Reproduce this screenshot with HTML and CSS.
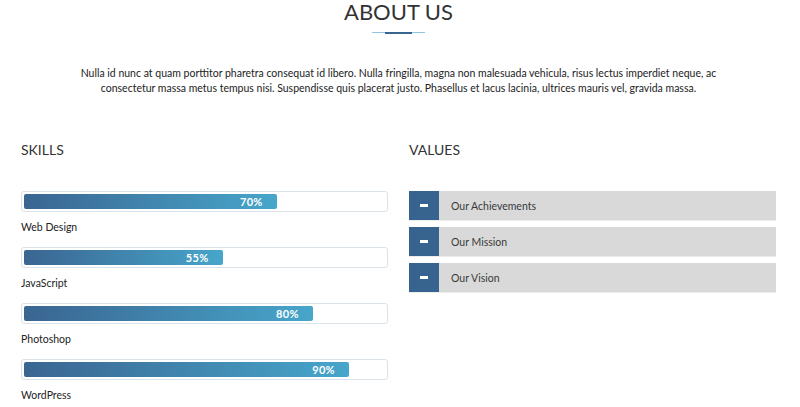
FILE: index.html
```html
<!DOCTYPE html>
<html>
<head>
<meta charset="utf-8">
<link rel="stylesheet" href="styles.css">
</head>
<body>
<section class="about">
  <h1 class="title">ABOUT US</h1>
  <div class="divider"><span class="divider-mid"></span></div>
  <p class="intro">Nulla id nunc at quam porttitor pharetra consequat id libero. Nulla fringilla, magna non malesuada vehicula, risus lectus imperdiet neque, ac consectetur massa metus tempus nisi. Suspendisse quis placerat justo. Phasellus et lacus lacinia, ultrices mauris vel, gravida massa.</p>
  <div class="columns">
    <div class="col">
      <h2 class="col-title">SKILLS</h2>
      <div class="skill">
        <div class="bar"><div class="fill" style="width:70%">70%</div></div>
        <div class="skill-name">Web Design</div>
      </div>
      <div class="skill">
        <div class="bar"><div class="fill" style="width:55%">55%</div></div>
        <div class="skill-name">JavaScript</div>
      </div>
      <div class="skill">
        <div class="bar"><div class="fill" style="width:80%">80%</div></div>
        <div class="skill-name">Photoshop</div>
      </div>
      <div class="skill">
        <div class="bar"><div class="fill" style="width:90%">90%</div></div>
        <div class="skill-name">WordPress</div>
      </div>
    </div>
    <div class="col">
      <h2 class="col-title">VALUES</h2>
      <div class="acc">
        <div class="acc-item"><span class="acc-icon"><span class="minus"></span></span><span class="acc-label">Our Achievements</span></div>
        <div class="acc-item"><span class="acc-icon"><span class="minus"></span></span><span class="acc-label">Our Mission</span></div>
        <div class="acc-item"><span class="acc-icon"><span class="minus"></span></span><span class="acc-label">Our Vision</span></div>
      </div>
    </div>
  </div>
</section>
</body>
</html>
```

FILE: styles.css
```css
html, body {
  margin: 0;
  padding: 0;
  background: #fff;
}
body {
  font-family: Lato, "Open Sans", sans-serif;
  color: #222;
  overflow: hidden;
}
.about {
  padding: 0 24px 0 21px;
}
.title {
  margin: 0;
  font-size: 22px;
  line-height: 23px;
  font-weight: 400;
  color: #333;
  text-align: center;
}
.divider {
  width: 53px;
  height: 1px;
  background: #8fc6df;
  margin: 9px auto 0;
  display: flex;
  justify-content: center;
}
.divider-mid {
  width: 27px;
  height: 2px;
  background: #3a6591;
}
.intro {
  width: 660px;
  margin: 33px auto 0;
  font-size: 10.5px;
  line-height: 15px;
  text-align: center;
  color: #222;
}
.columns {
  display: grid;
  grid-template-columns: 367px 367px;
  column-gap: 21px;
  margin-top: 44px;
}
.col-title {
  margin: 0 0 31px;
  font-size: 14px;
  line-height: 20px;
  font-weight: 400;
  color: #333;
}
.skill {
  margin-bottom: 12px;
}
.bar {
  height: 15px;
  border: 1px solid #dbe2e7;
  border-radius: 3px;
  padding: 2px;
}
.fill {
  height: 15px;
  border-radius: 2px;
  background: linear-gradient(to right, #3a6591, #47a6cb);
  color: #fff;
  font-size: 11px;
  font-weight: 700;
  line-height: 15px;
  text-align: right;
  padding-right: 14px;
  box-sizing: border-box;
  letter-spacing: 0.3px;
}
.skill-name {
  margin-top: 7px;
  font-size: 10.5px;
  line-height: 16px;
  color: #222;
}
.acc {
  display: flex;
  flex-direction: column;
  gap: 6px;
}
.acc-item {
  display: flex;
  height: 29px;
  background: #d9d9d9;
  border-bottom: 1px solid #ececec;
}
.acc-icon {
  width: 30px;
  background: #37638f;
  display: flex;
  align-items: center;
  justify-content: center;
}
.minus {
  width: 8px;
  height: 3px;
  background: #fff;
}
.acc-label {
  padding-left: 12px;
  font-size: 10.5px;
  line-height: 30px;
  color: #3a3a3a;
}
```
